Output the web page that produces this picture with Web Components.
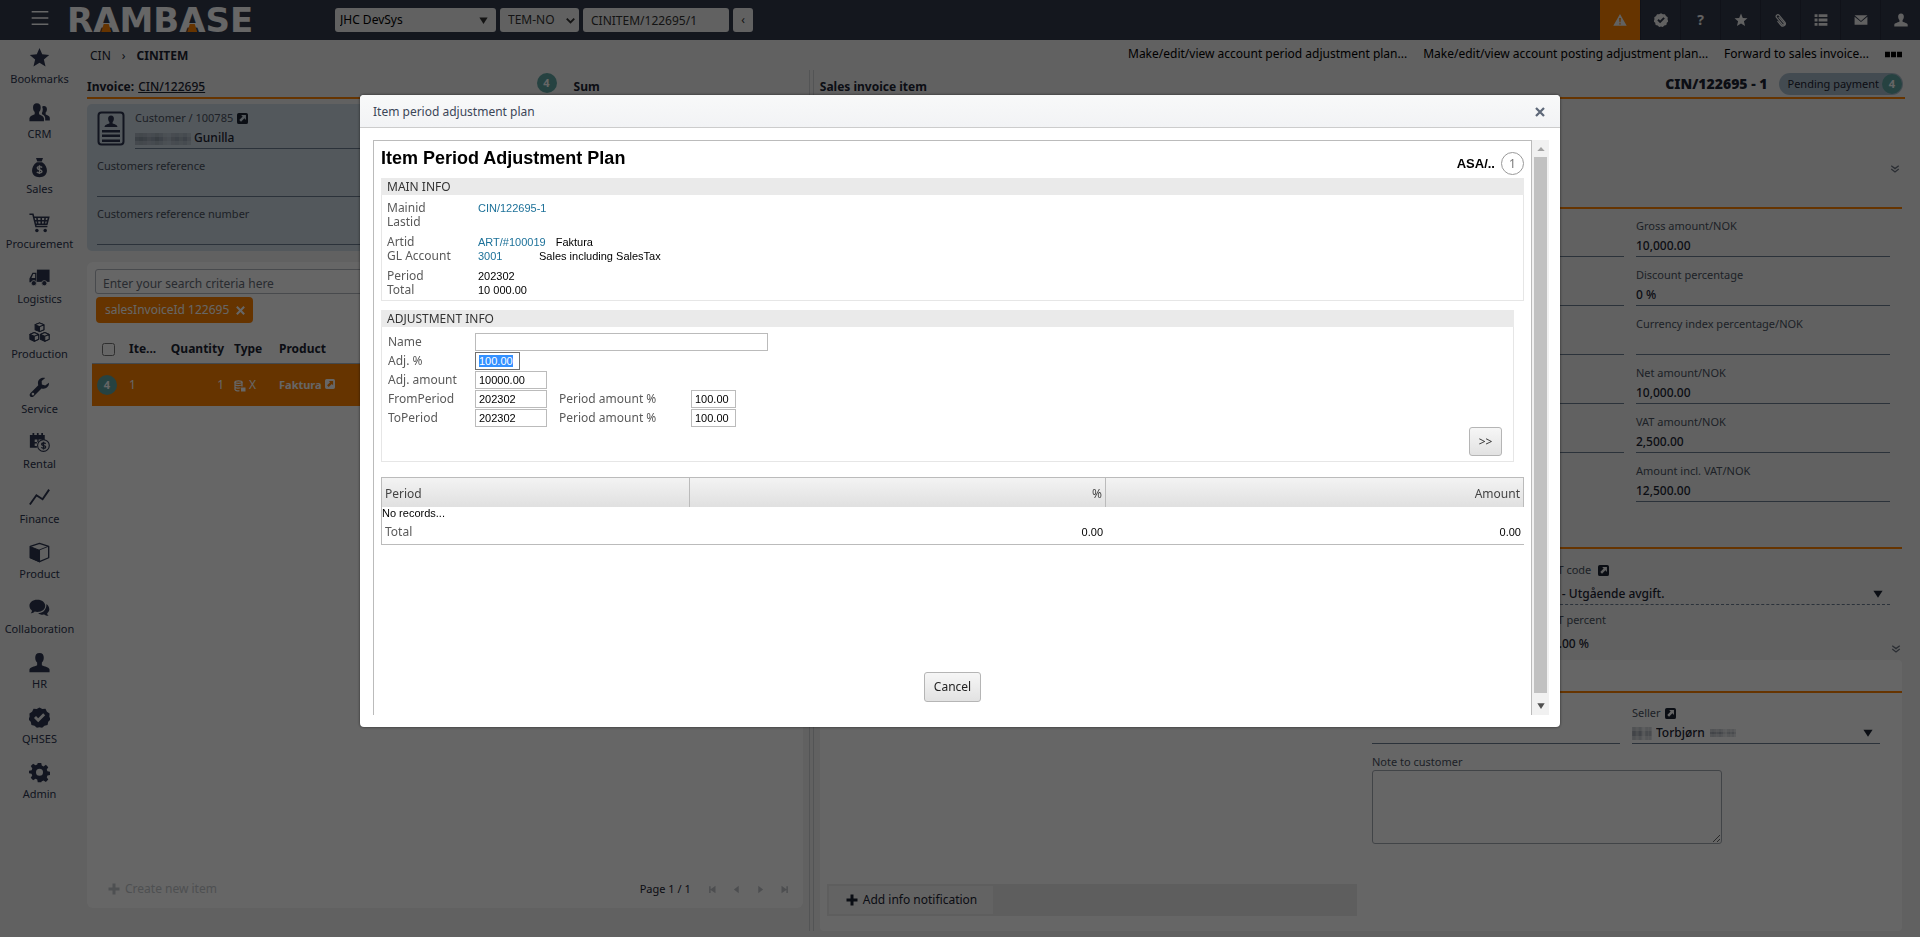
<!DOCTYPE html>
<html lang="en">
<head>
<meta charset="utf-8">
<meta name="viewport" content="width=device-width, initial-scale=1">
<title>RamBase - CINITEM/122695/1</title>
<style>
html, body { margin: 0; height: 100%; }
body {
  --navy: #2d3650; --bar: #323a4d; --orange: #ff8200; --teal: #5fa5a2;
  --ink: #1c2433; --label: #4b5362; --line: #6d7d92; --page: #f2f2f2;
  font: 12px/16px "Noto Sans", "Open Sans", sans-serif; color: var(--ink); background: var(--page);
}
</style>
</head>
<body>
<rb-app></rb-app>

<script>
const ICONS = {
  menu: '<path d="M2 4.5h20M2 12h20M2 19.5h20" fill="none" stroke="currentColor" stroke-width="2"/>',
  star: '<path d="M12 1l3.1 7.4 8 .7-6.1 5.2 1.9 7.9L12 18l-6.9 4.2L7 14.300.900 9.100l8-.7z"/>',
  users: '<path d="M9 1.500c3 0 4.500 2 4.400 5-.1 2.400-.9 4-1.900 5v2.500c2 1.200 5 1.800 5.600 4.500V22H.5v-3.500C1.100 15.800 4 15.200 6.500 14v-2.500c-1-1-1.800-2.600-1.900-5C4.500 3.500 6 1.500 9 1.500z"/><path d="M15 5.500c.9-1.500 5.500-1.800 5.500 2.500 0 2-.6 3.200-1.500 4v2.300c2 1 4.500 1.500 4.800 3.700v3h-5.300v-3c-.4-2-2-3-3.700-3.900v-1.600c1.200-2 1.200-5 .2-7z"/>',
  moneybag: '<path d="M8 1h8l-1.500 4h-5zM9 6h6c4 2.500 5.500 6.500 5.500 9.500 0 5-3.500 7.500-8.500 7.500s-8.500-2.500-8.500-7.500C3.500 12.500 5 8.500 9 6z"/><path d="M15 12c-1-1.200-5.500-1.600-5.500.7 0 2.600 5.300 1 5.300 3.700 0 2.400-4.800 2.200-5.800.6M12 9.500v10" fill="none" stroke="#f2f2f2" stroke-width="1.600"/>',
  cart: '<path d="M.5 2.500h4l3.500 14h13M5.500 6h17l-2 8H7.500M9 6l1 8M14 6v8M18.500 6l-1 8M6.500 10h15" fill="none" stroke="currentColor" stroke-width="1.800"/><circle cx="9" cy="21" r="2"/><circle cx="18.500" cy="21" r="2"/>',
  truck: '<path d="M9 3h14.500v14H9z"/><path fill-rule="evenodd" d="M8.500 6.500v11h-8V13L4 6.500zM4.800 8l-2 4.500H7V8z"/><circle cx="5.500" cy="18.500" r="3" stroke="#f2f2f2"/><circle cx="17.500" cy="18.500" r="3" stroke="#f2f2f2"/>',
  cubes: '<g stroke="currentColor" stroke-width="1.200" stroke-linejoin="round"><path d="M12 1l5 2.200v5.600L12 11 7 8.800V3.200zM6 12l5 2.200v5.600L6 22l-5-2.200v-5.600zM18 12l5 2.200v5.600L18 22l-5-2.200v-5.600z"/><path fill="#f2f2f2" d="M12 1l5 2.200-5 2.200-5-2.200zM12 5.400l5-2.200v5.600L12 11zM6 12l5 2.200-5 2.200-5-2.200zM6 16.400l5-2.200v5.600L6 22zM18 12l5 2.200-5 2.200-5-2.200zM18 16.400l5-2.200v5.600L18 22z"/></g>',
  wrench: '<path d="M22.800 6.500l-4.300 3.300-3.800-1.300L14.500 4.500l4-3.300c-3.500-1-8 .8-8.300 5.500 0 1 .1 1.900.4 2.700L1.500 18.500c-2.300 3 1 5.800 3.700 3.700l9.100-9.200c4.700 1.300 9-1.500 8.500-6.500zM4.500 21a1.500 1.500 0 1 1 0-3 1.500 1.500 0 0 1 0 3z"/>',
  rental: '<path d="M4 1h2v2.500h3V1h2v2.500h3V1h2v2.500h2V9h-3.500v-.500H11v3H9.500V8.500H6.500v3H9v1.500H6.500v3H9V18H1V3.500h3z"/><circle cx="16.500" cy="15.500" r="6.700" fill="#f2f2f2" stroke="currentColor" stroke-width="1.300"/><path d="M19 13.500c-1-1.400-4.600-1.300-4.600.5 0 2.200 4.700.8 4.700 3 0 2-4 2-5 .4M16.600 11v9" fill="none" stroke="currentColor" stroke-width="1.500"/>',
  chart: '<path d="M1 20L8.500 9.500l7 4.500L23 3" fill="none" stroke="currentColor" stroke-width="2.200"/>',
  cube: '<path d="M12 1.500L22.500 5v13L12 22.500 1.500 18V5z" fill="none" stroke="currentColor" stroke-width="1.500" stroke-linejoin="round"/><path d="M1.500 5.500L12 9.500v13L1.500 18zM12 9l10-4" stroke="currentColor" stroke-width="1.200"/>',
  chat: '<path d="M9.500 3c5.500 0 9 3 9 7s-3.500 7-9 7c-1 0-2-.1-3-.4C5.500 18 3.500 18.700 2 18.500c1-.8 1.400-2 1.300-3C1.500 14.200.5 12 .5 10c0-4 3.500-7 9-7z"/><path d="M20 8c3 2 5 7.500.8 10.500 0 1.200.6 2.200 1.700 3-2 .2-4-.5-5-1.500-2.500.5-5.500 0-7-1.500 5 0 9.500-3.500 9.500-10.500z"/>',
  person: '<path d="M12 1c3.500 0 5 2.300 4.900 5.500-.1 2.700-1 4.500-2.200 5.600v3c3 1.600 8.300 2 8.800 5V23H.5v-2.900c.5-3 5.800-3.400 8.800-5v-3C8.100 11 7.200 9.200 7.100 6.500 7 3.300 8.500 1 12 1z"/>',
  badge: '<path fill-rule="evenodd" d="M12 .5l3.200 1.700 3.600-.1 1.700 3.200 3 2-.2 3.700 1.200 3.300-2.500 2.600-.8 3.600-3.500 1L15 23.800 12 23l-3 .8-2.700-2.300-3.500-1L2 16.900-.5 14.300.7 11 .5 7.300l3-2 1.700-3.200 3.600.1zM10.500 17.500l8-8-2.300-2.300-5.700 5.700-2.500-2.500-2.300 2.300z"/>',
  gear: '<path fill-rule="evenodd" d="M10 1h4l.6 3.100 2 .9 2.700-1.800 2.700 2.700-1.700 2.700.8 2 3 .6v3.600l-3 .6-.8 2 1.700 2.700-2.700 2.700-2.700-1.700-2 .8L14 23h-4l-.6-3.100-2-.8-2.700 1.700L2 18.100l1.700-2.700-.8-2-3-.6V9.900l3.100-.6.8-2L2 4.700 4.700 2l2.700 1.800 2-.9zM12 7.800a4 4 0 1 0 0 8 4 4 0 0 0 0-8z"/>',
  alert: '<path fill-rule="evenodd" d="M12 1.500L23.500 22H.5zM10.500 8.500l.6 7.500h1.800l.6-7.500zM10.800 17.500v2.200h2.400v-2.200z"/>',
  clip: '<path d="M8 7l9 10.500c1.500 2-.8 4-2.500 2.300L4.500 8C2 5 6 1 9 4.200l9.500 11.300c3.500 5-3 9.500-6.500 5.500L6 14" fill="none" stroke="currentColor" stroke-width="2"/>',
  list: '<path d="M1 2h5v5H1zM8 2h15v5H8zM1 9.500h5v5H1zM8 9.500h15v5H8zM1 17h5v5H1zM8 17h15v5H8z"/>',
  mail: '<path d="M1 4h22L12 13.500zM1 6.500l11 9 11-9V20H1z"/>',
  card: '<rect x="1.500" y="1.500" width="25" height="32" rx="3" fill="none" stroke="currentColor" stroke-width="2"/><path d="M14 4.500c2 0 3 1.300 2.900 3.200-.1 1.500-.6 2.600-1.300 3.200v1.600c2 .9 4.500 1 4.900 3.500H7.500c.4-2.500 2.900-2.600 4.900-3.500v-1.600c-.7-.6-1.200-1.700-1.300-3.200C11 5.800 12 4.500 14 4.500zM5 19h18v2.500H5zM5 23.500h18V26H5zM5 28.500h18V31H5z"/>',
  open: '<path fill-rule="evenodd" d="M4 0h16a4 4 0 0 1 4 4v16a4 4 0 0 1-4 4H4a4 4 0 0 1-4-4V4a4 4 0 0 1 4-4zM9 4.500l3.300 3.300-7.300 7.400 3.800 3.800 7.400-7.300 3.300 3.300V4.500z"/>',
  cross: '<path d="M4 4l16 16M20 4L4 20" fill="none" stroke="currentColor" stroke-width="4.500"/>',
  plus: '<path d="M9 1h6v8h8v6h-8v8H9v-8H1V9h8z"/>',
  down: '<path d="M1 4h22L12 21z"/>',
  up: '<path d="M1 18h22L12 6z"/>',
  chevron: '<path d="M2 7l10 10L22 7" fill="none" stroke="currentColor" stroke-width="5"/>',
  more: '<path d="M3 4l9 7 9-7M3 12l9 7 9-7" fill="none" stroke="currentColor" stroke-width="3"/>',
  dots: '<path d="M0 8h7v8H0zM8.500 8h7v8h-7zM17 8h7v8h-7z"/>',
  first: '<path d="M3 3h4v8l13-9v20L7 13v8H3z"/>',
  prev: '<path d="M18 2v20L5 12z"/>',
  next: '<path d="M6 2v20l13-10z"/>',
  last: '<path d="M21 3h-4v8L4 2v20l13-9v8h4z"/>',
  stock: '<g fill="none" stroke="currentColor" stroke-width="2.500"><ellipse cx="9" cy="4" rx="7" ry="2.500"/><path d="M2 4v15c1 3 7 3 9 2.500M16 4v9M2 9c1 3 12 3 14 0M2 14c1 2.500 8 3 11 1.500"/></g><path d="M14 15h9v8h-9z"/>'
};

const BASE = `*, *::before { box-sizing: border-box; } a { color: inherit; text-decoration: none; }
button, input, select, textarea { font: inherit; color: inherit; margin: 0; }
h1, h2, p, ul, dl, dd, dt { margin: 0; padding: 0; font-size: inherit; font-weight: inherit; } ul { list-style: none; }`;

function define(name, html, setup) {
  const template = document.createElement("template");
  template.innerHTML = html;
  template.innerHTML = template.innerHTML.replace("<style>", "<style>" + BASE);
  customElements.define(name, class extends HTMLElement {
    constructor() {
      super();
      this.attachShadow({ mode: "open" }).append(template.content.cloneNode(true));
    }
    connectedCallback() { if (setup) setup(this, this.shadowRoot); }
  });
}

define("rb-icon", `<style>
:host { display: inline-block; flex: none; width: var(--size, 14px); height: var(--size, 14px); }
svg { display: block; width: 100%; height: 100%; fill: currentColor; }
</style><svg viewBox="0 0 24 24" aria-hidden="true"></svg>`, (el, root) => {
  const svg = root.querySelector("svg");
  if (el.getAttribute("name") === "card") svg.setAttribute("viewBox", "0 0 28 35");
  svg.innerHTML = ICONS[el.getAttribute("name")];
});

define("rb-badge", `<style>
:host { display: grid; place-items: center; flex: none; width: 20px; height: 20px; border-radius: 50%;
  background: var(--teal); color: #fff; font-weight: 700; font-size: 11px; line-height: 16px; }
</style><slot></slot>`);

/* Patch of scrambled pixels over a private name */
define("rb-redacted", `<style>
:host { display: inline-block; flex: none; width: 56px; height: 12px; vertical-align: middle; }
svg { display: block; width: 100%; height: 100%; }
</style><svg preserveAspectRatio="none" viewBox="0 0 14 3" aria-hidden="true" shape-rendering="crispEdges"></svg>`, (el, root) => {
  const tones = [.45, .5, .45, .35, .4, .5, .4, .25, .2, .35, .4, .3, .4, .25];
  root.querySelector("svg").innerHTML = [0, 1, 2].map(y => tones.map((t, x) =>
    `<rect x="${x}" y="${y}" width="1" height="1" fill="#4c5868" opacity="${t * (y === 1 ? 1 : .6)}"/>`).join("")).join("");
});

define("rb-topbar", `<style>
:host { display: flex; align-items: center; gap: 4px; height: 40px; padding-left: 30px; background: var(--bar); color: #fff; }
.menu { width: 20px; height: 24px; padding: 0; border: 0; background: none; --size: 20px; margin-right: 13px; }
.logo { width: 264px; font: 700 34px/40px "DejaVu Sans", sans-serif; }
.logo i { position: relative; font-style: normal; }
.logo i::before { content: ""; position: absolute; left: 8px; bottom: 8px; width: 10px; height: 8px; background: var(--orange); clip-path: polygon(25% 0, 75% 0, 100% 100%, 0 100%); }
.box { display: grid; align-items: center; height: 24px; color: #333; --size: 9px; }
.box > * { grid-area: 1 / 1; }
.box rb-icon { justify-self: end; margin-right: 8px; pointer-events: none; }
.box select.db + rb-icon { margin-right: 4px; }
select, input, .back { height: 24px; border: 0; border-radius: 3px; background: #f2f2f2; color: #333; padding: 0 8px; appearance: none; }
.company { width: 161px; padding: 0 5px; color: #000; } .db { width: 79px; } .path { width: 146px; } .back { width: 20px; padding: 0; }
nav { display: flex; margin-left: auto; align-self: stretch; }
nav a { display: grid; place-items: center; width: 40px; border-left: 1px solid #282f40; color: #f2f2f2; font-weight: 700; font-size: 14px; }
nav a.hot { background: var(--orange); border: 0; }
</style>
<button class="menu" aria-label="Menu"><rb-icon name="menu"></rb-icon></button>
<a class="logo" href="#">R<i>A</i>MB<i>A</i>SE</a>
<span class="box"><select class="company" aria-label="Company"><option>JHC DevSys</option></select><rb-icon name="down"></rb-icon></span>
<span class="box"><select class="db" aria-label="Database"><option>TEM-NO</option></select><rb-icon name="chevron"></rb-icon></span>
<input class="path" aria-label="Location" value="CINITEM/122695/1">
<button class="back" aria-label="Back">‹</button>
<nav>
<a class="hot" href="#" aria-label="Warnings"><rb-icon name="alert"></rb-icon></a><a href="#" aria-label="Approvals"><rb-icon name="badge"></rb-icon></a>
<a href="#">?</a><a href="#" aria-label="Favourites"><rb-icon name="star"></rb-icon></a><a href="#" aria-label="Files"><rb-icon name="clip"></rb-icon></a>
<a href="#" aria-label="Tasks"><rb-icon name="list"></rb-icon></a><a href="#" aria-label="Messages"><rb-icon name="mail"></rb-icon></a><a href="#" aria-label="Account"><rb-icon name="person"></rb-icon></a>
</nav>`);

define("rb-nav-item", `<style>
:host { display: block; height: 55px; padding-top: 7px; }
a { display: flex; flex-direction: column; align-items: center; gap: 3px; font-size: 11px; line-height: 16px; color: var(--navy); --size: 21px; }
</style><a href="#"><rb-icon></rb-icon><slot></slot></a>`, (el, root) => {
  root.querySelector("rb-icon").replaceWith(Object.assign(document.createElement("span"), { innerHTML: `<rb-icon name="${el.getAttribute("icon")}" style="display:block"></rb-icon>` }));
});

define("rb-sidebar", `<style>:host { display: block; width: 83px; padding-right: 4px; background: #f2f2f2; }</style>
<nav>
<rb-nav-item icon="star">Bookmarks</rb-nav-item><rb-nav-item icon="users">CRM</rb-nav-item><rb-nav-item icon="moneybag">Sales</rb-nav-item>
<rb-nav-item icon="cart">Procurement</rb-nav-item><rb-nav-item icon="truck">Logistics</rb-nav-item><rb-nav-item icon="cubes">Production</rb-nav-item>
<rb-nav-item icon="wrench">Service</rb-nav-item><rb-nav-item icon="rental">Rental</rb-nav-item><rb-nav-item icon="chart">Finance</rb-nav-item>
<rb-nav-item icon="cube">Product</rb-nav-item><rb-nav-item icon="chat">Collaboration</rb-nav-item><rb-nav-item icon="person">HR</rb-nav-item>
<rb-nav-item icon="badge">QHSES</rb-nav-item><rb-nav-item icon="gear">Admin</rb-nav-item>
</nav>`);

define("rb-toolbar", `<style>
:host { display: flex; align-items: center; height: 30px; padding: 2px 3px 0 0; }
.crumbs { display: flex; gap: 11px; padding-left: 3px; } b { font-weight: 700; }
.actions { display: flex; gap: 16px; margin-left: auto; color: #000; --size: 17px; }
</style>
<nav class="crumbs" aria-label="Breadcrumb"><a href="#">CIN</a><span>›</span><b>CINITEM</b></nav>
<nav class="actions"><a href="#">Make/edit/view account period adjustment plan...</a><a href="#">Make/edit/view account posting adjustment plan...</a><a href="#">Forward to sales invoice...</a><a href="#" aria-label="More"><rb-icon name="dots"></rb-icon></a></nav>`);

define("rb-field", `<style>
:host { display: block; border-bottom: 1px solid var(--line); padding: var(--field-top, 9px) 0 2px; }
.label { display: flex; align-items: center; gap: 4px; min-height: 16px; font-size: 11px; line-height: 16px; color: var(--label); --size: 11px; }
.label ::slotted(rb-icon) { color: var(--ink); }
.value { min-height: 16px; margin-top: var(--field-gap, 4px); font-weight: 500; line-height: 16px; font-size: 12px; }
</style><div class="label"><span></span><slot name="extra"></slot></div><div class="value"><slot></slot></div>`, (el, root) => {
  root.querySelector("span").textContent = el.getAttribute("label") || "";
});

define("rb-customer-card", `<style>
:host { display: block; margin-top: 5px; padding: 0 10px 6px; border-radius: 5px; background: #cfdbe5; }
.who { display: flex; gap: 10px; }
.who > rb-icon { width: 28px; height: 35px; margin-top: 7px; color: var(--navy); }
.who rb-field { flex: 1; --field-top: 6px; }
</style>
<div class="who"><rb-icon name="card"></rb-icon><rb-field label="Customer / 100785"><rb-icon slot="extra" name="open"></rb-icon><rb-redacted></rb-redacted> Gunilla</rb-field></div>
<rb-field label="Customers reference"></rb-field>
<rb-field label="Customers reference number"></rb-field>`);

define("rb-item-list", `<style>
:host { display: flex; flex-direction: column; flex: 1; margin-top: 11px; border-radius: 6px; background: #fff; padding: 7px 5px 2px; }
.search { display: block; width: calc(100% - 6px); height: 25px; margin: 0 3px 3px; padding: 3px 7px 0; border: 1px solid #b4b9c0; border-radius: 3px; background: #fff; }
.search::placeholder { color: #666d78; opacity: 1; }
.chip { align-self: flex-start; display: flex; align-items: center; gap: 6px; height: 26px; margin-left: 4px; padding: 0 7px 0 9px; border: 0; border-radius: 4px; background: var(--orange); color: #fff; --size: 11px; }
table { table-layout: fixed; width: 100%; border-collapse: collapse; }
th { height: 40px; padding: 13px 5px 0; text-align: left; font-weight: 700; border-bottom: 1px solid #a9b3c0; white-space: nowrap; }
td { height: 43px; padding: 0 5px; background: var(--orange); color: #fff; font-size: 12px; --size: 10px; }
td.product { font-size: 11px; font-weight: 700; }
.num { text-align: right; }
input[type=checkbox] { display: block; width: 13px; height: 13px; margin: 0 0 0 5px; }
footer { display: flex; align-items: center; height: 34px; margin-top: auto; padding: 0 9px 0 16px; }
.create { display: flex; align-items: center; gap: 5px; border: 0; padding: 0; background: none; color: #c3c7cc; --size: 12px; }
.pager { display: flex; align-items: center; gap: 15px; margin-left: auto; color: #c0c4c9; --size: 9px; font-size: 11px; }
.pager span { color: var(--ink); margin-right: 2px; } .pager button { display: grid; border: 0; padding: 0; background: none; }
</style>
<input class="search" type="search" aria-label="Search" placeholder="Enter your search criteria here">
<button class="chip">salesInvoiceId 122695<rb-icon name="cross"></rb-icon></button>
<table><colgroup><col style="width:32px"><col style="width:36px"><col style="width:69px"><col style="width:45px"><col></colgroup>
<thead><tr><th><input type="checkbox" aria-label="Select all"></th><th>Ite...</th><th class="num">Quantity</th><th>Type</th><th>Product</th></tr></thead>
<tbody><tr><td><rb-badge>4</rb-badge></td><td>1</td><td class="num">1</td><td><rb-icon name="stock" style="--size:12px;vertical-align:middle"></rb-icon> X</td><td class="product">Faktura <rb-icon name="open"></rb-icon></td></tr></tbody></table>
<footer><button class="create"><rb-icon name="plus"></rb-icon>Create new item</button>
<div class="pager"><span>Page 1 / 1</span><button aria-label="First"><rb-icon name="first"></rb-icon></button><button aria-label="Previous"><rb-icon name="prev"></rb-icon></button><button aria-label="Next"><rb-icon name="next"></rb-icon></button><button aria-label="Last"><rb-icon name="last"></rb-icon></button></div></footer>`);

define("rb-invoice-pane", `<style>
:host { display: flex; flex-direction: column; padding-bottom: 23px; min-width: 0; }
.heads { display: grid; grid-template-columns: 473fr 229fr; gap: 13px; }
h2 { display: flex; align-items: center; gap: 4px; height: 29px; padding-top: 6px; border-bottom: 2px solid var(--orange); font-weight: 700; }
h2 a { font-weight: 500; text-decoration: underline; } h2 rb-badge { margin: -8px 4px 0 auto; }
</style>
<div class="heads"><h2>Invoice: <a href="#">CIN/122695</a><rb-badge>4</rb-badge></h2><h2>Sum</h2></div>
<rb-customer-card></rb-customer-card><rb-item-list></rb-item-list>`);

define("rb-item-pane", `<style>
:host { display: flex; flex-direction: column; min-width: 0; }
header { display: flex; align-items: center; height: 29px; border-bottom: 2px solid var(--orange); font-weight: 700; }
header h2 { font-weight: 700; padding-top: 6px; } header b { margin-left: auto; font-size: 14px; }
.pill { display: flex; align-items: center; gap: 3px; height: 22px; margin: 0 2px 0 11px; padding: 0 1px 0 9px; border-radius: 11px; background: #a9bccb; font-weight: 400; font-size: 11px; }
.sec { display: flex; justify-content: flex-end; align-items: flex-end; border-bottom: 2px solid var(--orange); margin-right: 3px; --size: 10px; color: #6a7280; }
.s1 { height: 110px; } .s1 rb-icon { margin: 0 2px 33px 0; } .s2 { height: 47px; }
.four { display: grid; grid-template-columns: repeat(4, 1fr); gap: 1px 12px; padding: 0 15px 0 18px; }
.blank { border-color: transparent; }
.vat { display: grid; grid-template-columns: 1fr 345px 15px; padding: 6px 0 0; --field-top: 7px; --field-gap: 8px; color: var(--ink); }
.vat > div { grid-column: 2; } .vat rb-field:first-child { border-bottom-style: dashed; } .vat rb-field:last-child { border-color: transparent; }
.more { align-self: end; --size: 10px; color: #6a7280; margin: 0 0 1px 1px; }
.card { display: flex; flex-direction: column; flex: 1; margin: 5px 3px 0 0; background: #fff; border-radius: 4px; }
.card .sec { height: 33px; margin: 0; }
.cols { display: grid; grid-template-columns: 1fr 1fr; flex: 1; }
.notes { align-self: end; display: flex; margin: 0 4px 15px 7px; padding: 2px; background: #ebebeb; }
.notes button { display: flex; align-items: center; gap: 5px; height: 28px; padding: 0 16px 0 17px; border: 0; background: #f7f7f7; --size: 12px; }
.seller { display: grid; grid-template-columns: 1fr 1fr; gap: 1px 12px; align-content: start; padding: 3px 22px 0 11px; }
.note { grid-column: 1 / -1; padding-top: 9px; font-size: 11px; color: var(--label); }
label { display: block; line-height: 16px; } textarea { display: block; width: 350px; max-width: 100%; height: 74px; border: 1px solid #a4aab2; border-radius: 3px; background: #fff; }
.pick { display: grid; align-items: center; --size: 10px; }
.pick > * { grid-area: 1 / 1; } .pick rb-icon { justify-self: end; margin-right: 7px; pointer-events: none; }
.pick select { width: 100%; height: 16px; line-height: 16px; padding: 0; border: 0; background: none; appearance: none; font-weight: 500; }
.pick .name { padding-left: 24px; } .pick rb-redacted { height: 13px; width: 20px; } .pick .tail { width: 26px; height: 8px; margin-left: 78px; }
</style>
<header><h2>Sales invoice item</h2><b>CIN/122695 - 1</b><span class="pill">Pending payment<rb-badge>4</rb-badge></span></header>
<div class="sec s1"><rb-icon name="more"></rb-icon></div>
<div class="four" id="sums"></div>
<div class="sec s2"></div>
<div class="vat"><div>
<rb-field label="VAT code"><rb-icon slot="extra" name="open" style="margin-left:3px"></rb-icon><span class="pick"><select aria-label="VAT code"><option>03 - Utgående avgift.</option></select><rb-icon name="down"></rb-icon></span></rb-field>
<rb-field label="VAT percent">25.00 %</rb-field></div><rb-icon class="more" name="more"></rb-icon></div>
<div class="card"><div class="sec"></div><div class="cols">
<div class="notes"><button><rb-icon name="plus"></rb-icon>Add info notification</button></div>
<div class="seller"><rb-field></rb-field><rb-field label="Seller"><rb-icon slot="extra" name="open"></rb-icon><span class="pick"><rb-redacted></rb-redacted><rb-redacted class="tail"></rb-redacted><select class="name" aria-label="Seller"><option>Torbjørn</option></select><rb-icon name="down"></rb-icon></span></rb-field>
<div class="note"><label for="note">Note to customer</label><textarea id="note"></textarea></div></div>
</div></div>`, (el, root) => {
  const rows = [["Gross amount/NOK", "10,000.00"], ["Discount percentage", "0 %"], ["Currency index percentage/NOK", ""],
    ["Net amount/NOK", "10,000.00"], ["VAT amount/NOK", "2,500.00"], ["Amount incl. VAT/NOK", "12,500.00"]];
  root.querySelector("#sums").innerHTML = rows.map(([l, v], i) => {
    const c = i === 5 ? ' class="blank"' : "";
    return `<rb-field${c}></rb-field><rb-field${c}></rb-field><rb-field${c}></rb-field><rb-field label="${l}">${v}</rb-field>`;
  }).join("");
});

define("rb-panel", `<style>
:host { display: block; border: 1px solid #e6e6e6; border-top: 0; }
h2 { height: 17px; margin: 0 -1px; padding-left: 6px; background: #eaeaea; color: #333; line-height: 17px; }
</style><h2></h2><slot></slot>`, (el, root) => { root.querySelector("h2").textContent = el.getAttribute("heading"); });

define("rb-adjustment-plan", `<style>
:host { display: block; padding: 7px 7px 13px; color: #5a5a5a; --arial: 11px/14px "Liberation Sans", Arial, sans-serif; }
.top { display: flex; justify-content: space-between; height: 30px; padding-bottom: 3px; color: #000; }
h1 { font: 700 18px/20px "Liberation Sans", Arial, sans-serif; }
.owner { display: flex; align-items: center; align-self: flex-end; gap: 6px; font: 700 13px/16px "Liberation Sans", Arial, sans-serif; }
.owner i { display: grid; place-items: center; width: 23px; height: 23px; border: 1px solid #999; border-radius: 50%; font: 12px/16px "Noto Sans", sans-serif; color: #777; }
dl { display: grid; grid-template-columns: 91px 1fr; padding: 6px 5px 3px; line-height: 14px; }
dd { display: flex; gap: 10px; font: var(--arial); color: #000; } dd a { color: #1d7199; min-width: 51px; }
.gap { margin-top: 6px; }
.adjust { margin: 9px 10px 15px 0; }
form { padding: 6px 11px 5px 6px; }
.rows { display: grid; grid-template-columns: 87px auto auto 1fr; justify-items: start; align-items: center; gap: 1px 0; line-height: 18px; }
.rows label.second { width: 144px; padding-left: 12px; }
input { height: 18px; width: 72px; padding: 0 3px; border: 1px solid #bbb; background: #fff; font: var(--arial); color: #000; }
input:focus { outline: 0; border-color: #707070; } input::selection { background: #3390ff; color: #fff; }
.wide { width: 293px; grid-column: 2 / -1; } .pct { width: 45px; } .span { grid-column: 2 / -1; }
.act { display: block; border: 1px solid #b5b5b5; border-radius: 3px; background: linear-gradient(#f6f6f6, #e2e2e2); color: #333; padding: 0; height: 30px; }
.go { width: 33px; margin: 0 0 0 auto; height: 29px; }
table { width: 100%; table-layout: fixed; border-collapse: separate; border-spacing: 0; border: solid #bbb; border-width: 1px 0 1px 1px; }
th { height: 29px; padding: 2px 3px 0; background: linear-gradient(#f3f3f3, #e0e0e0); border-right: 1px solid #bbb; text-align: left; font-weight: 400; color: #444; }
td { height: 24px; padding: 0 3px; font: var(--arial); color: #000; } td.t { font: inherit; color: #5a5a5a; }
td.none { height: 13px; padding: 0; line-height: 13px; } .r { text-align: right; }
.cancel { width: 57px; margin: 127px auto 0; color: #222; }
</style>
<div class="top"><h1>Item Period Adjustment Plan</h1><div class="owner">ASA/..<i>1</i></div></div>
<rb-panel heading="MAIN INFO"><dl>
<dt>Mainid</dt><dd><a href="#">CIN/122695-1</a></dd><dt>Lastid</dt><dd></dd>
<dt class="gap">Artid</dt><dd class="gap"><a href="#">ART/#100019</a>Faktura</dd><dt>GL Account</dt><dd><a href="#">3001</a>Sales including SalesTax</dd>
<dt class="gap">Period</dt><dd class="gap">202302</dd><dt>Total</dt><dd>10 000.00</dd></dl></rb-panel>
<rb-panel class="adjust" heading="ADJUSTMENT INFO"><form><div class="rows">
<label for="name">Name</label><input id="name" class="wide">
<label for="pct">Adj. %</label><span class="span" style="display:flex"><input id="pct" class="pct" value="100.00"></span>
<label for="amt">Adj. amount</label><span class="span" style="display:flex"><input id="amt" value="10000.00"></span>
<label for="from">FromPeriod</label><input id="from" value="202302"><label class="second" for="fp">Period amount %</label><input id="fp" class="pct" value="100.00">
<label for="to">ToPeriod</label><input id="to" value="202302"><label class="second" for="tp">Period amount %</label><input id="tp" class="pct" value="100.00">
</div><button type="button" class="act go">&gt;&gt;</button></form></rb-panel>
<table><colgroup><col style="width:27%"><col style="width:36.4%"><col></colgroup>
<thead><tr><th>Period</th><th class="r">%</th><th class="r">Amount</th></tr></thead>
<tbody><tr><td class="none" colspan="3">No records...</td></tr><tr><td class="t">Total</td><td class="r">0.00</td><td class="r">0.00</td></tr></tbody></table>
<button type="button" class="act cancel">Cancel</button>`, (el, root) => {
  const field = root.querySelector("#pct");
  field.focus({ preventScroll: true });
  field.select();
});

define("rb-dialog", `<style>
:host { position: fixed; inset: 0; display: flex; justify-content: center; align-items: flex-start; padding-top: 95px; background: rgba(0, 0, 0, .6); }
section { width: 1200px; max-width: 100%; background: #fff; border-radius: 4px; box-shadow: 0 0 3px rgba(0, 0, 0, .6); overflow: hidden; }
header { display: flex; justify-content: space-between; align-items: center; height: 33px; padding: 2px 14px 0 13px; border-bottom: 1px solid #ccc; background: linear-gradient(#f8f9f9, #f2f3f5); color: #3c4657; }
header button { display: grid; border: 0; padding: 0; background: none; color: #5e6878; --size: 12px; }
.frame { display: flex; padding: 12px 11px 12px 13px; }
.page { flex: 1; border: solid #bbb; border-width: 1px 1px 0 1px; min-width: 0; }
.bar { display: flex; flex-direction: column; align-items: center; justify-content: space-between; width: 17px; padding: 5px 0; background: #f1f1f1; --size: 8px; color: #505050; }
.bar rb-icon:first-child { color: #a3a3a3; } .bar i { flex: 1; width: 13px; margin: 4px 0 9px; background: #c1c1c1; }
</style>
<section role="dialog" aria-labelledby="title"><header><span id="title">Item period adjustment plan</span><button aria-label="Close"><rb-icon name="cross"></rb-icon></button></header>
<div class="frame"><div class="page"><slot></slot></div><div class="bar" aria-hidden="true"><rb-icon name="up"></rb-icon><i></i><rb-icon name="down"></rb-icon></div></div></section>`);

define("rb-app", `<style>
:host { display: grid; grid-template-rows: 40px 1fr; min-height: 100vh; }
.body { display: flex; } main { flex: 1; display: grid; grid-template-rows: 30px 1fr; min-width: 0; padding: 0 15px 6px 4px; }
.panes { display: grid; grid-template-columns: 715fr 5px 1084fr; column-gap: 6px; }
.split { border: solid #d0d2d5; border-width: 0 1px; }
</style>
<rb-topbar></rb-topbar>
<div class="body"><rb-sidebar></rb-sidebar><main><rb-toolbar></rb-toolbar>
<div class="panes"><rb-invoice-pane></rb-invoice-pane><div class="split"></div><rb-item-pane></rb-item-pane></div></main></div>
<rb-dialog><rb-adjustment-plan></rb-adjustment-plan></rb-dialog>`);
</script>
</body>
</html>
